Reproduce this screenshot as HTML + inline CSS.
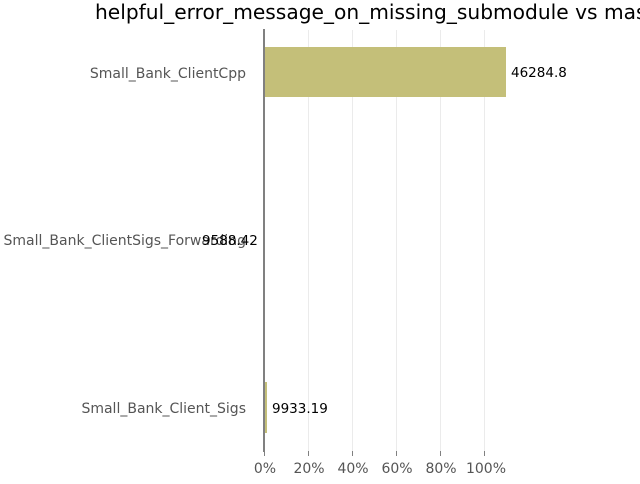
<!DOCTYPE html>
<html><head><style>
body{margin:0;width:640px;height:480px;background:#fff;overflow:hidden;font-family:"DejaVu Sans","Liberation Sans",sans-serif}
</style></head><body>
<svg width="640" height="480" xmlns="http://www.w3.org/2000/svg" font-family="DejaVu Sans, Liberation Sans, sans-serif">
<g stroke="#ebebeb" stroke-width="1">
<line x1="308.5" y1="30" x2="308.5" y2="451"/>
<line x1="352.5" y1="30" x2="352.5" y2="451"/>
<line x1="396.5" y1="30" x2="396.5" y2="451"/>
<line x1="440.5" y1="30" x2="440.5" y2="451"/>
<line x1="484.5" y1="30" x2="484.5" y2="451"/>
</g>
<rect x="264" y="47" width="242" height="50" fill="#c4bf79"/>
<rect x="264" y="382" width="3" height="51" fill="#c4bf79"/>
<line x1="264" y1="29" x2="264" y2="452" stroke="#808080" stroke-width="2"/>
<g stroke="#808080" stroke-width="1">
<line x1="264.5" y1="451" x2="264.5" y2="456"/>
<line x1="308.5" y1="451" x2="308.5" y2="456"/>
<line x1="352.5" y1="451" x2="352.5" y2="456"/>
<line x1="396.5" y1="451" x2="396.5" y2="456"/>
<line x1="440.5" y1="451" x2="440.5" y2="456"/>
<line x1="484.5" y1="451" x2="484.5" y2="456"/>
</g>
<g font-size="14" fill="#555" text-anchor="middle">
<text x="265" y="473">0%</text>
<text x="309" y="473">20%</text>
<text x="353" y="473">40%</text>
<text x="397" y="473">60%</text>
<text x="441" y="473">80%</text>
<text x="486" y="473">100%</text>
</g>
<g font-size="14" fill="#555" text-anchor="end">
<text x="246" y="78">Small_Bank_ClientCpp</text>
<text x="246" y="245">Small_Bank_ClientSigs_Forwarding</text>
<text x="246" y="413">Small_Bank_Client_Sigs</text>
</g>
<g font-size="13.5" fill="#000">
<text x="511" y="77">46284.8</text>
<text x="202" y="245">9588.42</text>
<text x="272" y="413">9933.19</text>
</g>
<text x="95" y="19" font-size="20.2" fill="#000">helpful_error_message_on_missing_submodule vs master</text>
</svg>
</body></html>
